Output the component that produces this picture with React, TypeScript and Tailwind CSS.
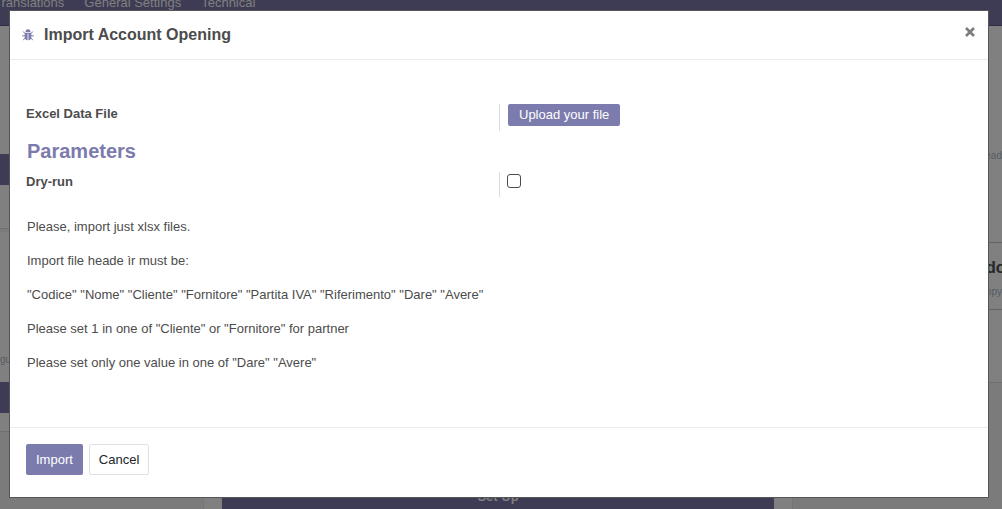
import React from 'react';

const notes = [
  'Please, import just xlsx files.',
  'Import file heade ìr must be:',
  '"Codice" "Nome" "Cliente" "Fornitore" "Partita IVA" "Riferimento" "Dare" "Avere"',
  'Please set 1 in one of "Cliente" or "Fornitore" for partner',
  'Please set only one value in one of "Dare" "Avere"',
];

function BugIcon() {
  return (
    <svg viewBox="0 0 12 12" className="h-3 w-3" fill="none" stroke="#7c7bad" aria-hidden="true">
      <path d="M3.500 3a2.500 2.700 0 0 1 5 0z" fill="#7c7bad" stroke="none" />
      <path d="M2.700 3.700h6.600v4.600Q9.300 11 6.400 11.200V4.800h-.8v6.400Q2.700 11 2.700 8.300z" fill="#7c7bad" stroke="none" />
      <path d="M3 4.600 1.200 2.500M9 4.600l1.800-2.100M3 6.800H.2M9 6.800h2.800M3.200 8.900l-2 2.300M8.800 8.900l2 2.300" />
    </svg>
  );
}

function Backdrop() {
  return (
    <div className="flex min-h-screen flex-col overflow-hidden bg-[#7b7b7b]" aria-hidden="true">
      <nav className="-mt-1 flex h-[30px] items-start gap-5 border-b border-[#302e47] bg-[#3e3c54] pr-4 text-[13px] leading-[14px] text-[#808080]">
        <span className="-ml-[6px]">Translations</span>
        <span>General Settings</span>
        <span>Technical</span>
      </nav>
      <div className="flex flex-1 justify-between">
        <div className="flex w-[10px] flex-col overflow-hidden text-[10px] text-[#555c65]">
          <div className="flex h-[203px] flex-col border-b border-[#6f6f6f] bg-[#808080] pt-[128px]">
            <div className="h-[31px] bg-[#3e3c54]" />
          </div>
          <div className="mt-[3px] flex h-[200px] flex-col border-b border-[#6f6f6f] bg-[#808080] pt-[121px]">
            <span className="h-[29px] leading-[14px]">gu</span>
            <div className="h-[31px] bg-[#3e3c54]" />
          </div>
        </div>
        <div className="flex w-[590px] flex-col justify-end border-x border-[#757575] bg-[#808080] px-[18px]">
          <div className="flex h-[25px] items-center justify-center bg-[#3e3c54] text-[13px] font-bold leading-[15px] text-[#808080]">
            Set Up
          </div>
        </div>
        <div className="flex w-[16px] flex-col overflow-hidden text-[10px] text-[#555c65]">
          <div className="flex h-[357px] flex-col border-b border-[#6f6f6f] bg-[#808080]">
            <span className="mt-[123px] flex h-[93px] justify-end leading-[14px]">ead</span>
            <div className="flex h-[68px] flex-col items-start border-y border-[#646464] pt-[15px]">
              <strong className="h-[27px] text-base leading-[20px] text-[#242629]">do</strong>
              <span className="leading-[14px]">opy</span>
            </div>
          </div>
        </div>
      </div>
    </div>
  );
}

export default function App() {
  return (
    <div className="relative overflow-hidden font-['Liberation_Sans',Arial,sans-serif] text-[13px] text-[#4c4c4c]">
      <Backdrop />
      <div className="absolute inset-0 flex flex-col pt-[10px] pr-[13px] pb-[11px] pl-[9px]">
        <section
          role="dialog"
          aria-labelledby="dialog-title"
          className="flex flex-1 flex-col border border-[#565656] bg-white bg-clip-padding"
        >
          <header className="flex h-[49px] items-center border-b border-[#e9ecef] px-3">
            <BugIcon />
            <h1 id="dialog-title" className="ml-[10px] text-base leading-6 font-bold">
              Import Account Opening
            </h1>
            <button type="button" aria-label="Close" className="ml-auto flex h-5 w-3 items-start justify-center pt-[2px]">
              <svg viewBox="0 0 10 10" className="h-[10px] w-[10px]" stroke="#7c7c7c" strokeWidth="2.600" aria-hidden="true">
                <path d="M1 1l8 8M9 1l-8 8" />
              </svg>
            </button>
          </header>

          <main className="flex flex-1 flex-col px-4 pt-11">
            <div className="grid grid-cols-2">
              <span className="leading-5 font-bold">Excel Data File</span>
              <div className="flex h-[27px] items-start border-l border-[#dddddd] pl-2">
                <button
                  type="button"
                  className="h-[22px] rounded-[2px] bg-[#7c7bad] px-[11px] text-white"
                >
                  Upload your file
                </button>
              </div>
            </div>
            <h2 className="mt-[7px] mb-2 pl-px text-xl leading-[26px] font-bold text-[#7c7bad]">Parameters</h2>
            <div className="grid grid-cols-2">
              <label htmlFor="dry-run" className="leading-5 font-bold">Dry-run</label>
              <div className="flex h-[25px] items-start border-l border-[#dddddd] pt-[2px] pl-[7px]">
                <input
                  id="dry-run"
                  type="checkbox"
                  className="h-[14px] w-[14px] appearance-none rounded-[3px] border border-[#4c4c4c] bg-white checked:bg-[#7c7bad]"
                />
              </div>
            </div>
            <div className="mt-5 flex flex-col gap-[14px] pl-px leading-5">
              {notes.map((note) => (
                <p key={note}>{note}</p>
              ))}
            </div>
          </main>

          <footer className="flex h-[70px] items-start gap-[6px] border-t border-[#e9ecef] px-4 pt-4">
            <button type="button" className="h-[31px] rounded-[2px] bg-[#7c7bad] px-[10px] text-white">
              Import
            </button>
            <button type="button" className="h-[31px] rounded-[2px] border border-[#dee2e6] bg-white px-[9px] text-[#212529]">
              Cancel
            </button>
          </footer>
        </section>
      </div>
    </div>
  );
}
